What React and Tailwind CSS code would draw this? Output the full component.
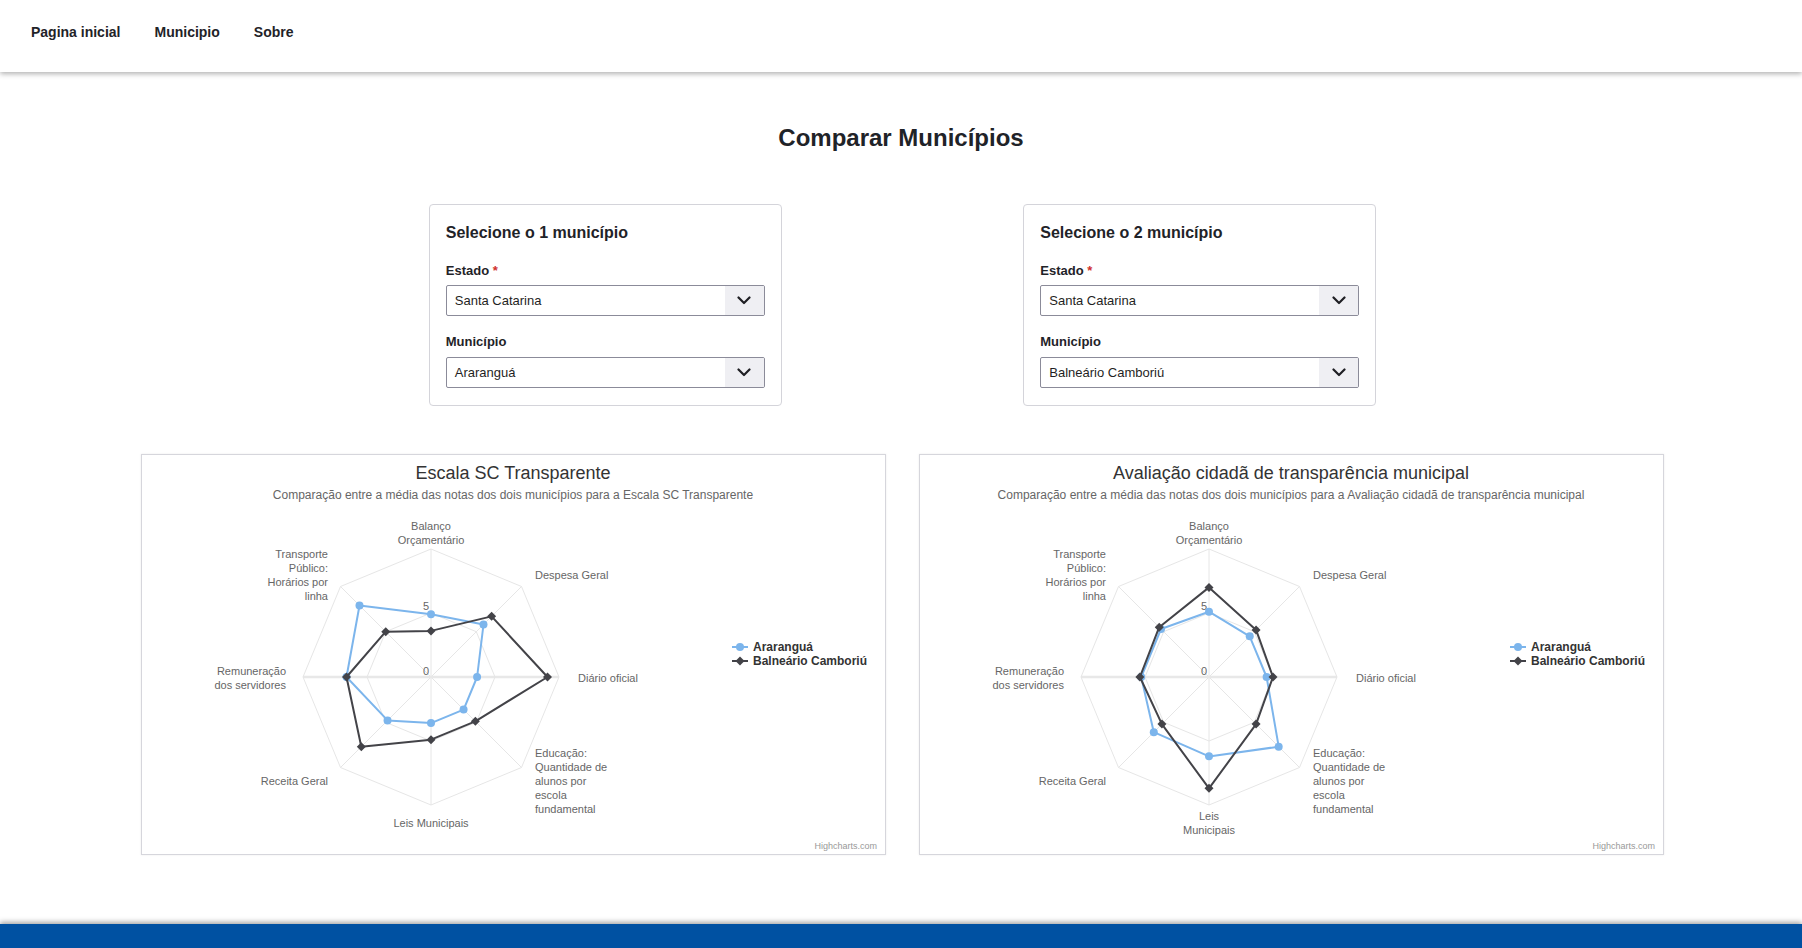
import React from "react";

const FONT = { fontFamily: '"Liberation Sans", Arial, Helvetica, sans-serif' };
const CX = 289;
const CY = 222;
const R = 128;

function pt(r, i) {
  const a = (i * Math.PI) / 4;
  return [CX + r * Math.sin(a), CY - r * Math.cos(a)];
}

function poly(r) {
  return Array.from({ length: 8 }, (_, i) => pt(r, i).map((v) => v.toFixed(1)).join(",")).join(" ");
}

function seriesPts(vals) {
  return vals.map((v, i) => pt((v / 10) * R, i));
}

function Diamond({ x, y, fill }) {
  return <polygon points={`${x},${y - 4.5} ${x + 4.5},${y} ${x},${y + 4.5} ${x - 4.5},${y}`} fill={fill} />;
}

function Radar({ title, subtitle, blue, dark, leisTwo }) {
  const labels = [
    { lines: ["Balanço", "Orçamentário"], x: CX, y: [75, 89], a: "middle" },
    { lines: ["Despesa Geral"], x: 393, y: [124], a: "start" },
    { lines: ["Diário oficial"], x: 436, y: [227], a: "start" },
    { lines: ["Educação:", "Quantidade de", "alunos por", "escola", "fundamental"], x: 393, y: [302, 316, 330, 344, 358], a: "start" },
    leisTwo
      ? { lines: ["Leis", "Municipais"], x: CX, y: [365, 379], a: "middle" }
      : { lines: ["Leis Municipais"], x: CX, y: [372], a: "middle" },
    { lines: ["Receita Geral"], x: 186, y: [330], a: "end" },
    { lines: ["Remuneração", "dos servidores"], x: 144, y: [220, 234], a: "end" },
    { lines: ["Transporte", "Público:", "Horários por", "linha"], x: 186, y: [103, 117, 131, 145], a: "end" },
  ];
  const bp = seriesPts(blue);
  const dp = seriesPts(dark);
  const toStr = (p) => p.map(([x, y]) => `${x.toFixed(1)},${y.toFixed(1)}`).join(" ");
  return (
    <div className="w-[745px] h-[401px] border border-[#d6d6dc] shadow-[0_0_2px_rgba(0,0,0,0.08)] bg-white">
      <svg width="743" height="399" style={FONT}>
        <text x="371" y="24" textAnchor="middle" fontSize="18" fill="#333333">{title}</text>
        <text x="371" y="44" textAnchor="middle" fontSize="12" fill="#666666">{subtitle}</text>
        {Array.from({ length: 8 }, (_, i) => {
          const [x, y] = pt(R, i);
          return <line key={i} x1={CX} y1={CY} x2={x} y2={y} stroke="#e6e6e6" strokeWidth={i % 4 === 2 ? 0 : 1} />;
        })}
        <line x1={CX - R} y1={CY} x2={CX + R} y2={CY} stroke="#e8e8e8" strokeWidth="2.5" />
        <polygon points={poly(R / 2)} fill="none" stroke="#e6e6e6" strokeWidth="1" />
        <polygon points={poly(R)} fill="none" stroke="#e6e6e6" strokeWidth="1" />
        <text x="287" y="155" textAnchor="end" fontSize="11" fill="#666666">5</text>
        <text x="287" y="220" textAnchor="end" fontSize="11" fill="#666666">0</text>
        {labels.map((l, i) => (
          <text key={i} x={l.x} textAnchor={l.a} fontSize="11" fill="#666666">
            {l.lines.map((s, j) => (
              <tspan key={j} x={l.x} y={l.y[j]}>{s}</tspan>
            ))}
          </text>
        ))}
        <polygon points={toStr(bp)} fill="none" stroke="#7cb5ec" strokeWidth="2" strokeLinejoin="round" />
        {bp.map(([x, y], i) => (
          <circle key={i} cx={x} cy={y} r="4" fill="#7cb5ec" />
        ))}
        <polygon points={toStr(dp)} fill="none" stroke="#434348" strokeWidth="2" strokeLinejoin="round" />
        {dp.map(([x, y], i) => (
          <Diamond key={i} x={x} y={y} fill="#434348" />
        ))}
        <line x1="590" y1="192" x2="606" y2="192" stroke="#7cb5ec" strokeWidth="2" />
        <circle cx="598" cy="192" r="4" fill="#7cb5ec" />
        <text x="611" y="196" fontSize="12" fontWeight="bold" fill="#333333">Araranguá</text>
        <line x1="590" y1="206" x2="606" y2="206" stroke="#434348" strokeWidth="2" />
        <Diamond x={598} y={206} fill="#434348" />
        <text x="611" y="210" fontSize="12" fontWeight="bold" fill="#333333">Balneário Camboriú</text>
        <text x="735" y="394" textAnchor="end" fontSize="9" fill="#999999">Highcharts.com</text>
      </svg>
    </div>
  );
}

function Chevron() {
  return (
    <svg width="14" height="9" viewBox="0 0 14 9">
      <path d="M1.5 1.5 L7 7 L12.5 1.5" fill="none" stroke="#1f1f24" strokeWidth="2.2" strokeLinecap="round" strokeLinejoin="round" />
    </svg>
  );
}

function Select({ value }) {
  return (
    <div className="flex h-[31px] border border-[#8b8b99] rounded-[2px] bg-white overflow-hidden">
      <div className="flex-1 flex items-center pl-2 text-[13px] text-[#1f1f24]">{value}</div>
      <div className="w-[39px] bg-[#efeff3] flex items-center justify-center">
        <Chevron />
      </div>
    </div>
  );
}

function Card({ n, city }) {
  return (
    <div className="w-[353px] border border-[#d4d4da] rounded-[4px] bg-white px-4 pt-[18px] pb-[17px]">
      <div className="text-[16px] leading-5 font-bold text-[#1f2328]">Selecione o {n} município</div>
      <div className="mt-[20px] text-[13px] leading-4 font-bold text-[#1f2328]">
        Estado <span className="text-[#d0312d]">*</span>
      </div>
      <div className="mt-[6px]">
        <Select value="Santa Catarina" />
      </div>
      <div className="mt-[18px] text-[13px] leading-4 font-bold text-[#1f2328]">Município</div>
      <div className="mt-[7px]">
        <Select value={city} />
      </div>
    </div>
  );
}

export default function App() {
  return (
    <div className="min-h-[948px] bg-white flex flex-col" style={FONT}>
      <nav className="h-[72px] bg-white flex items-center pl-[14px] pb-[8px] shadow-[0_2px_5px_rgba(0,0,0,0.3)] relative z-10">
        {["Pagina inicial", "Municipio", "Sobre"].map((t) => (
          <a key={t} className="px-[17px] text-[14px] font-bold text-[#1f2328] cursor-pointer">{t}</a>
        ))}
      </nav>
      <main className="flex-1 pt-[51px]">
        <h1 className="text-center text-[24px] leading-[29px] font-bold text-[#1f2328]">Comparar Municípios</h1>
        <div className="mt-[52px] w-[1189px] ml-[308px] grid grid-cols-2">
          <div className="flex justify-center">
            <Card n={1} city="Araranguá" />
          </div>
          <div className="flex justify-center">
            <Card n={2} city="Balneário Camboriú" />
          </div>
        </div>
        <div className="mt-[48px] ml-[141px] flex gap-[33px]">
          <Radar
            title="Escala SC Transparente"
            subtitle="Comparação entre a média das notas dos dois municípios para a Escala SC Transparente"
            blue={[4.9, 5.8, 3.6, 3.6, 3.6, 4.8, 6.6, 7.9]}
            dark={[3.6, 6.7, 9.1, 4.9, 4.9, 7.7, 6.6, 5.0]}
          />
          <Radar
            title="Avaliação cidadã de transparência municipal"
            subtitle="Comparação entre a média das notas dos dois municípios para a Avaliação cidadã de transparência municipal"
            blue={[5.1, 4.5, 4.5, 7.7, 6.2, 6.1, 5.3, 5.3]}
            dark={[7.0, 5.2, 5.0, 5.2, 8.7, 5.2, 5.4, 5.5]}
            leisTwo
          />
        </div>
      </main>
      <footer className="mt-[69px] h-[60px] bg-[#0051a2] shadow-[0_-2px_5px_rgba(0,0,0,0.35)]" />
    </div>
  );
}
